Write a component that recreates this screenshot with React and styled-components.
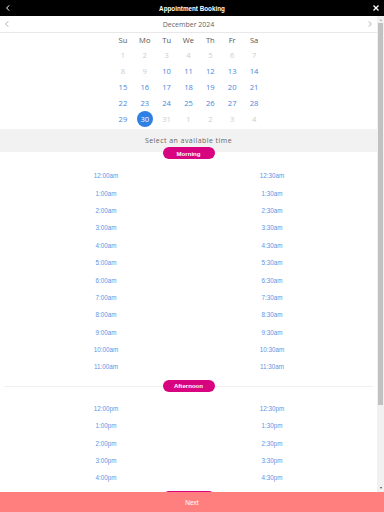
import React from 'react'
import styled, { createGlobalStyle } from 'styled-components'

const GlobalStyle = createGlobalStyle`
	html, body {
		margin: 0;
		padding: 0;
		background: #fff;
	}
	#root {
		width: 384px;
		height: 512px;
	}
`

const Page = styled.div`
	width: 384px;
	height: 512px;
	display: flex;
	flex-direction: column;
	font-family: 'Open Sans', 'Liberation Sans', sans-serif;
	overflow: hidden;
`

const TopBar = styled.div`
	height: 16px;
	flex: none;
	background: #000;
	color: #fff;
	display: flex;
	align-items: center;
	justify-content: space-between;
	padding: 0 3px;
	position: relative;
`

const TopTitle = styled.div`
	position: absolute;
	left: 0;
	right: 0;
	text-align: center;
	font-family: 'Liberation Sans', Arial, sans-serif;
	font-weight: 700;
	font-size: 6.3px;
	pointer-events: none;
`

const IconBtn = styled.span`
	display: flex;
	align-items: center;
	justify-content: center;
	width: 10px;
	height: 10px;
`

const Body = styled.div`
	flex: 1;
	min-height: 0;
	display: flex;
`

const Scroller = styled.div`
	flex: 1;
	overflow-y: auto;
	overflow-x: hidden;
	scrollbar-width: none;
	&::-webkit-scrollbar {
		display: none;
	}
`

const Track = styled.div`
	width: 7px;
	flex: none;
	background: #f1f1f1;
	display: flex;
	flex-direction: column;
	align-items: center;
	justify-content: space-between;
	padding: 2px 0;
`

const Thumb = styled.div`
	width: 5px;
	height: ${({ size }) => size}px;
	background: #c1c1c1;
	margin-top: 1px;
	margin-bottom: auto;
`

const Arrow = styled.div`
	width: 0;
	height: 0;
	border-left: 1.5px solid transparent;
	border-right: 1.5px solid transparent;
	${({ down }) =>
		down ? 'border-top: 2px solid #505050;' : 'border-bottom: 2px solid #a3a3a3;'}
	margin: 1px 0;
`

const MonthNav = styled.div`
	height: 16px;
	border-bottom: 1px solid #e8e8e8;
	display: flex;
	align-items: center;
	justify-content: space-between;
	padding: 0 3px;
`

const MonthLabel = styled.div`
	font-size: 7px;
	color: #666;
`

const Grid = styled.div`
	width: 153px;
	margin: 0 auto;
	display: grid;
	grid-template-columns: repeat(7, 1fr);
	grid-template-rows: 14px;
	grid-auto-rows: 16px;
	padding-bottom: 2px;
`

const WeekDay = styled.div`
	display: flex;
	align-items: center;
	justify-content: center;
	font-size: 7.6px;
	color: #555;
`

const Day = styled.div`
	display: flex;
	align-items: center;
	justify-content: center;
	font-size: 7.6px;
	color: ${({ muted }) => (muted ? '#cdcdcd' : '#4a86e0')};
	& span {
		width: 16px;
		height: 16px;
		border-radius: 50%;
		display: flex;
		align-items: center;
		justify-content: center;
		background: ${({ selected }) => (selected ? '#2f80e4' : 'transparent')};
		color: ${({ selected }) => (selected ? '#fff' : 'inherit')};
	}
`

const Prompt = styled.div`
	height: 23px;
	background: #f2f2f2;
	display: flex;
	align-items: center;
	justify-content: center;
	font-size: 7px;
	letter-spacing: 0.45px;
	color: #666;
`

const SectionHead = styled.div`
	height: 12px;
	margin-top: ${({ first }) => (first ? '-5px' : '0')};
	display: flex;
	align-items: center;
	justify-content: center;
	position: relative;
	&::before {
		content: '';
		position: absolute;
		left: 4px;
		right: 4px;
		top: 6px;
		height: 1px;
		background: ${({ first }) => (first ? 'transparent' : '#f0f0f0')};
	}
`

const Pill = styled.div`
	position: relative;
	width: 52px;
	height: 12px;
	border-radius: 6px;
	background: #d8037f;
	color: #fff;
	font-family: 'Liberation Sans', Arial, sans-serif;
	font-weight: 700;
	font-size: 6.1px;
	display: flex;
	align-items: center;
	justify-content: center;
`

const Times = styled.div`
	display: grid;
	grid-template-columns: 1fr 1fr;
	grid-auto-rows: 17.4px;
	padding: 8px 22px 4px 23px;
`

const Time = styled.div`
	display: flex;
	align-items: center;
	justify-content: center;
	font-family: 'Liberation Sans', Arial, sans-serif;
	font-size: 6.3px;
	color: #6592e4;
`

const Footer = styled.div`
	height: 20px;
	flex: none;
	background: #ff7f7f;
	color: #fff;
	display: flex;
	align-items: center;
	justify-content: center;
	font-family: 'Liberation Sans', Arial, sans-serif;
	font-size: 6.5px;
`

const Chevron = ({ dir = 'left', color = '#fff', size = 8 }) => (
	<svg width={size} height={size} viewBox="0 0 8 8">
		<path
			d={dir === 'left' ? 'M5.2 1.3 L2.6 4 L5.2 6.7' : 'M2.8 1.3 L5.4 4 L2.8 6.7'}
			fill="none"
			stroke={color}
			strokeWidth="1"
		/>
	</svg>
)

const Close = () => (
	<svg width="8" height="8" viewBox="0 0 8 8">
		<path d="M1.5 1.5 L6.5 6.5 M6.5 1.5 L1.5 6.5" stroke="#fff" strokeWidth="1.3" />
	</svg>
)

const weekDays = ['Su', 'Mo', 'Tu', 'We', 'Th', 'Fr', 'Sa']

const days = [
	...[1, 2, 3, 4, 5, 6, 7, 8, 9].map(d => ({ d, muted: true })),
	...Array.from({ length: 21 }, (_, i) => ({ d: i + 10 })),
	{ d: 31, muted: true },
	...[1, 2, 3, 4].map(d => ({ d, muted: true }))
]

const fmt = (h, m, suf) => `${h === 0 ? 12 : h}:${m}${suf}`

const slots = (from, to, suf) => {
	const out = []
	for (let h = from; h < to; h++) {
		out.push(fmt(h, '00', suf), fmt(h, '30', suf))
	}
	return out
}

const sections = [
	{ name: 'Morning', times: slots(0, 12, 'am') },
	{ name: 'Afternoon', times: slots(0, 5, 'pm') },
	{ name: 'Evening', times: slots(5, 12, 'pm') }
]

const App = () => (
	<Page>
		<GlobalStyle />
		<TopBar>
			<IconBtn>
				<Chevron />
			</IconBtn>
			<TopTitle>Appointment Booking</TopTitle>
			<IconBtn>
				<Close />
			</IconBtn>
		</TopBar>
		<Body>
			<Scroller>
				<MonthNav>
					<Chevron color="#b0b0b0" />
					<MonthLabel>December 2024</MonthLabel>
					<Chevron dir="right" color="#b0b0b0" />
				</MonthNav>
				<Grid>
					{weekDays.map(w => (
						<WeekDay key={w}>{w}</WeekDay>
					))}
					{days.map((day, i) => (
						<Day key={i} muted={day.muted} selected={day.d === 30 && !day.muted}>
							<span>{day.d}</span>
						</Day>
					))}
				</Grid>
				<Prompt>Select an available time</Prompt>
				{sections.map((s, i) => (
					<div key={s.name}>
						<SectionHead first={i === 0}>
							<Pill>{s.name}</Pill>
						</SectionHead>
						<Times>
							{s.times.map(t => (
								<Time key={t}>{t}</Time>
							))}
						</Times>
					</div>
				))}
			</Scroller>
			<Track>
				<Arrow />
				<Thumb size={382} />
				<Arrow down />
			</Track>
		</Body>
		<Footer>Next</Footer>
	</Page>
)

export default App
